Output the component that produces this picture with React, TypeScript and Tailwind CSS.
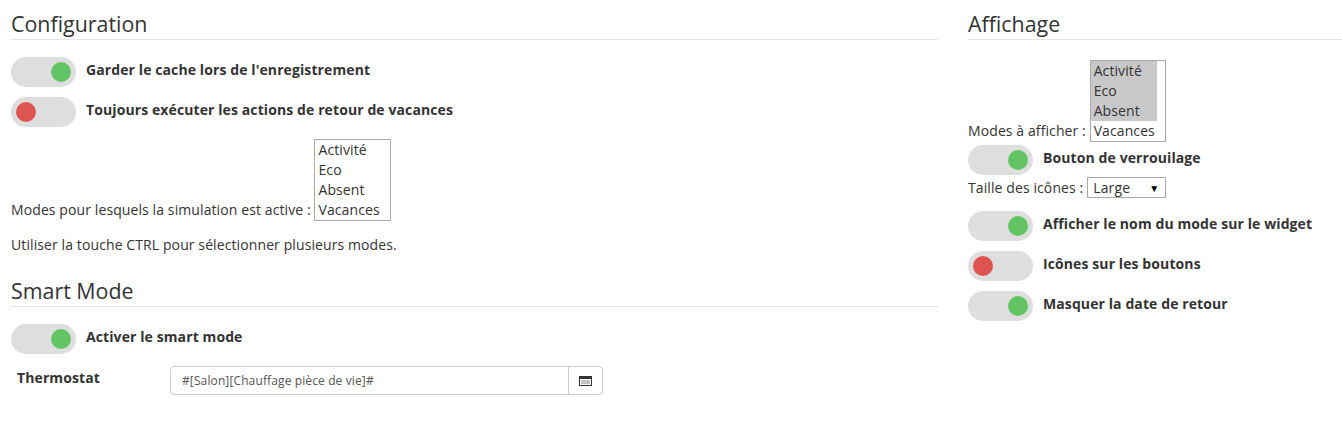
import React from 'react';

type ToggleProps = {
  on: boolean;
  label: string;
};

function Toggle({ on, label }: ToggleProps) {
  return (
    <div className="flex items-start gap-[10px]">
      <div
        className={
          on
            ? 'flex h-[30px] w-[65px] shrink-0 items-center justify-end rounded-full bg-[#dedede] px-[5px]'
            : 'flex h-[30px] w-[65px] shrink-0 items-center justify-start rounded-full bg-[#dedede] px-[5px]'
        }
      >
        <span className={on ? 'h-[20px] w-[20px] rounded-full bg-[#62c462]' : 'h-[20px] w-[20px] rounded-full bg-[#dd5451]'} />
      </div>
      <span className="pt-[3px] text-[14px] font-bold leading-[20px]">{label}</span>
    </div>
  );
}

function Heading({ children }: { children: React.ReactNode }) {
  return (
    <div className="border-b border-[#e5e5e5] pb-[3px]">
      <h3 className="text-[21.4px] font-normal leading-[24px] tracking-normal">{children}</h3>
    </div>
  );
}

type ListBoxProps = {
  options: string[];
  selected?: string[];
  width: string;
};

function ListBox({ options, selected = [], width }: ListBoxProps) {
  return (
    <div className={`inline-block border border-[#a9a9a9] bg-white align-baseline ${width}`}>
      {options.map((o) => (
        <div
          key={o}
          className={selected.includes(o) ? 'mr-[8px] bg-[#c8c8c8] pl-[3px] leading-[20px]' : 'pl-[3px] leading-[20px]'}
        >
          {o}
        </div>
      ))}
    </div>
  );
}

function ListIcon() {
  return (
    <svg width="13" height="10" viewBox="0 0 13 10" aria-hidden="true">
      <rect x="0.5" y="0.5" width="12" height="9" fill="none" stroke="#333" />
      <rect x="0" y="0" width="13" height="3" fill="#333" />
      <rect x="2" y="4.5" width="9" height="1" fill="#888" />
      <rect x="2" y="6.5" width="9" height="1" fill="#888" />
    </svg>
  );
}

const modes = ['Activité', 'Eco', 'Absent', 'Vacances'];

export default function App() {
  return (
    <div
      className="flex h-[430px] w-[1342px] gap-[30px] overflow-hidden bg-white pl-[11px] pt-[12px] text-[14px] tracking-[0.1px] text-[#333]"
      style={{ fontFamily: '"Open Sans", "Noto Sans", sans-serif' }}
    >
      {/* Colonne gauche */}
      <div className="flex w-[927px] shrink-0 flex-col">
        <Heading>Configuration</Heading>

        <div className="mt-[17px] flex flex-col gap-[10px]">
          <Toggle on label="Garder le cache lors de l'enregistrement" />
          <Toggle on={false} label="Toujours exécuter les actions de retour de vacances" />
        </div>

        <div className="mt-[12px] leading-[20px]">
          Modes pour lesquels la simulation est active : <ListBox options={modes} width="w-[77px]" />
        </div>

        <p className="mt-[14px] leading-[20px]">Utiliser la touche CTRL pour sélectionner plusieurs modes.</p>

        <div className="mt-[24px]">
          <Heading>Smart Mode</Heading>
        </div>

        <div className="mt-[17px]">
          <Toggle on label="Activer le smart mode" />
        </div>

        <div className="mt-[12px] flex items-start">
          <span className="w-[159px] pl-[6px] pt-[2px] font-bold leading-[20px]">Thermostat</span>
          <div className="flex h-[29px] w-[433px] overflow-hidden rounded-[4px] border border-[#ccc]">
            <div className="flex flex-1 items-center px-[11px] text-[12px] tracking-[0.12px] text-[#555]">#[Salon][Chauffage pièce de vie]#</div>
            <div className="flex w-[34px] items-center justify-center border-l border-[#ccc]">
              <ListIcon />
            </div>
          </div>
        </div>
      </div>

      {/* Colonne droite */}
      <div className="flex flex-1 flex-col">
        <Heading>Affichage</Heading>

        <div className="mt-[20px] leading-[20px]">
          Modes à afficher : <ListBox options={modes} selected={['Activité', 'Eco', 'Absent']} width="w-[76px]" />
        </div>

        <div className="mt-[3px]">
          <Toggle on label="Bouton de verrouilage" />
        </div>

        <div className="mt-[2px] flex items-center leading-[20px]">
          <span>Taille des icônes :</span>
          <div className="ml-[4px] flex h-[21px] w-[79px] items-center justify-between border border-[#a9a9a9] pl-[5px] pr-[6px]">
            <span>Large</span>
            <span className="text-[10px] text-black">▼</span>
          </div>
        </div>

        <div className="mt-[13px] flex flex-col gap-[10px]">
          <Toggle on label="Afficher le nom du mode sur le widget" />
          <Toggle on={false} label="Icônes sur les boutons" />
          <Toggle on label="Masquer la date de retour" />
        </div>
      </div>
    </div>
  );
}
